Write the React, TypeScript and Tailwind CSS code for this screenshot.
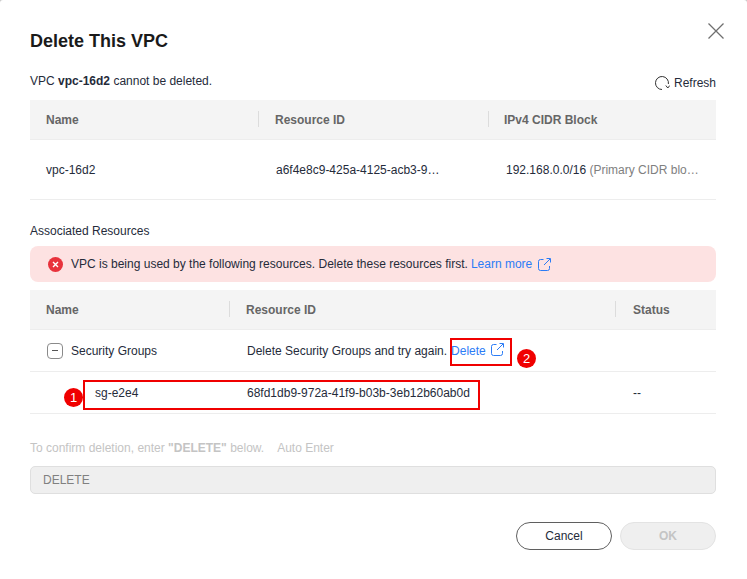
const ExternalIcon = () => (
  <svg width="13" height="13" viewBox="0 0 13 13" fill="none" stroke="#2b7cf6" strokeWidth="1" className="shrink-0">
    <path d="M5.5 1.5H2.5a2 2 0 0 0-2 2v7a2 2 0 0 0 2 2h7a2 2 0 0 0 2-2V8" />
    <path d="M6 7 12 1M8.5.5h4V4.5" />
  </svg>
);

const RefreshIcon = () => (
  <svg width="15" height="16" viewBox="0 0 15 16" fill="none" stroke="#333" strokeWidth="1" className="shrink-0">
    <path d="M7 14.5A6.5 6.5 0 1 1 13.4 9" />
    <path d="M10.8 10.5 12.8 13 14.8 10.5" />
  </svg>
);

const Badge = ({ n, className }: { n: number; className: string }) => (
  <span className={`absolute flex size-[19px] items-center justify-center rounded-full bg-[#f00000] text-[13px] text-white ${className}`}>{n}</span>
);

const Divider = () => <span className="absolute left-0 top-[11px] h-4 w-px bg-[#dcdcdc]" />;

export default function App() {
  return (
    <div className="h-[579px] w-[747px] overflow-hidden bg-[#c8c8c8]">
      <div className="relative h-[579px] rounded-t-[3px] bg-white font-['Liberation_Sans',Arial,sans-serif] text-xs text-[#252b3a]">
        <div className="pl-[30px] pr-[31px] pt-[31px]">
          <div className="flex items-start justify-between">
            <h1 className="text-lg font-bold leading-[21px] text-[#1a1a1a]">Delete This VPC</h1>
            <svg width="16" height="16" viewBox="0 0 16 16" stroke="#6f6f6f" strokeWidth="1.3" className="mr-[-8px] mt-[-8px]">
              <path d="M.5.5l15 15M15.5.5l-15 15" />
            </svg>
          </div>

          <div className="mt-[22px] flex h-[26px] items-start justify-between">
            <p className="leading-[14px]">VPC <b>vpc-16d2</b> cannot be deleted.</p>
            <span className="mt-px flex items-center gap-[4px] leading-[14px]"><RefreshIcon />Refresh</span>
          </div>

          <div className="grid grid-cols-[228px_230px_228px] border-b border-[#ededed]">
            <div className="flex h-10 items-center border-b border-[#ededed] bg-[#f4f4f4] pl-4 font-bold text-[#666]">Name</div>
            <div className="relative flex h-10 items-center border-b border-[#ededed] bg-[#f4f4f4] pl-[17px] font-bold text-[#666]"><Divider />Resource ID</div>
            <div className="relative flex h-10 items-center border-b border-[#ededed] bg-[#f4f4f4] pl-4 font-bold text-[#666]"><Divider />IPv4 CIDR Block</div>
            <div className="flex h-[59px] items-center pl-4">vpc-16d2</div>
            <div className="flex h-[59px] items-center pl-[18px]">a6f4e8c9-425a-4125-acb3-9…</div>
            <div className="flex h-[59px] items-center pl-[18px]">192.168.0.0/16&nbsp;<span className="text-[#808080]">(Primary CIDR blo…</span></div>
          </div>

          <p className="mt-6 leading-[14px]">Associated Resources</p>

          <div className="mt-[8px] flex h-9 items-center rounded-lg bg-[#fde2e2] pl-[18px]">
            <svg width="15" height="15" viewBox="0 0 15 15" className="mr-[8px] shrink-0">
              <circle cx="7.5" cy="7.5" r="7.5" fill="#e8323c" />
              <path d="M5 5l5 5M10 5l-5 5" stroke="#fff" strokeWidth="1.4" />
            </svg>
            <span>VPC is being used by the following resources. Delete these resources first.</span>
            <span className="ml-[3px] text-[#2b7cf6]">Learn more</span>
            <span className="ml-[6px]"><ExternalIcon /></span>
          </div>

          <div className="relative mt-2 grid grid-cols-[199px_386px_101px]">
            <div className="flex h-10 items-center border-b border-[#ededed] bg-[#f4f4f4] pl-4 font-bold text-[#666]">Name</div>
            <div className="relative flex h-10 items-center border-b border-[#ededed] bg-[#f4f4f4] pl-[17px] font-bold text-[#666]"><Divider />Resource ID</div>
            <div className="relative flex h-10 items-center border-b border-[#ededed] bg-[#f4f4f4] pl-[18px] font-bold text-[#666]"><Divider />Status</div>

            <div className="flex h-[42px] items-center border-b border-[#ededed] pl-[17px]">
              <span className="mr-[8px] flex size-4 items-center justify-center rounded-[4px] border border-[#8a8a8a]">
                <span className="h-px w-[6px] bg-[#555]" />
              </span>
              Security Groups
            </div>
            <div className="flex h-[42px] items-center border-b border-[#ededed] pl-[18px]">
              Delete Security Groups and try again.
              <span className="ml-[4px] text-[#2b7cf6]">Delete</span>
              <span className="ml-[5px] mt-[-3px]"><ExternalIcon /></span>
            </div>
            <div className="h-[42px] border-b border-[#ededed]" />

            <div className="flex h-[42px] items-center border-b border-[#ededed] pl-[65px]">sg-e2e4</div>
            <div className="flex h-[42px] items-center border-b border-[#ededed] pl-[18px]">68fd1db9-972a-41f9-b03b-3eb12b60ab0d</div>
            <div className="flex h-[42px] items-center border-b border-[#ededed] pl-[18px]">--</div>

            {/* red annotation boxes */}
            <span className="absolute left-[53px] top-[90px] h-[30px] w-[397px] border-2 border-[#f00000]" />
            <span className="absolute left-[420px] top-[48px] h-[28px] w-[62px] border-2 border-[#f00000]" />
            <Badge n={1} className="left-[34px] top-[98px]" />
            <Badge n={2} className="left-[487px] top-[59px]" />
          </div>

          <p className="mt-[27px] leading-[14px] text-[#c4c4c4]">
            To confirm deletion, enter <span className="font-bold">"DELETE"</span> below.<span className="ml-[13px]">Auto Enter</span>
          </p>

          <div className="mt-[11px] flex h-[28px] items-center rounded-[5px] border border-[#dfdfdf] bg-[#efefef] pl-[12px] text-[#808080]">DELETE</div>

          <div className="mt-[28px] flex justify-end gap-2">
            <button className="h-7 w-24 rounded-full border border-[#5f5f5f] bg-white text-[#252b3a]">Cancel</button>
            <button className="h-7 w-24 rounded-full border border-[#e3e3e3] bg-[#efefef] font-bold text-[#c4c4c4]">OK</button>
          </div>
        </div>
      </div>
    </div>
  );
}
